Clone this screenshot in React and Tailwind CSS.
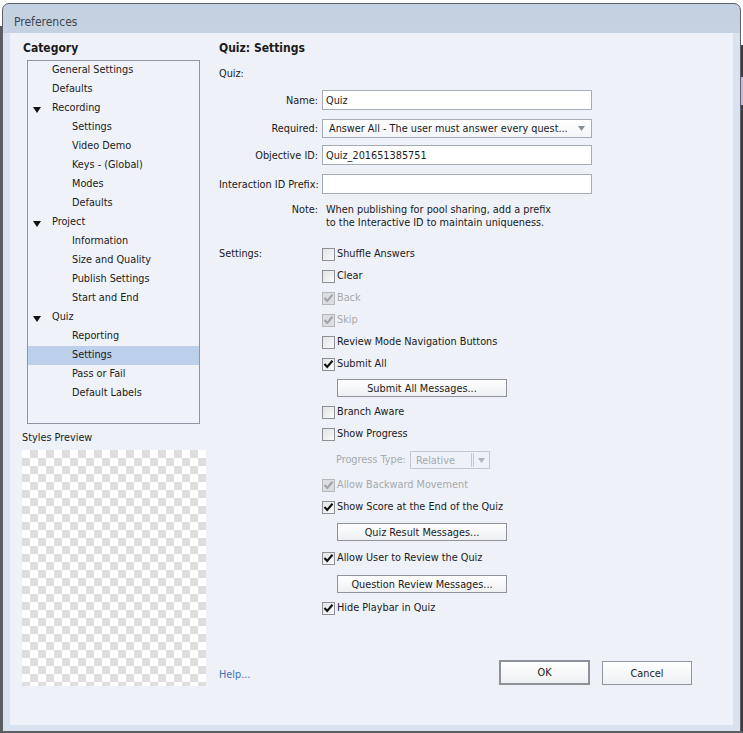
import React from "react";

const tree = [
  { t: "General Settings", l: 1 },
  { t: "Defaults", l: 1 },
  { t: "Recording", l: 1, open: true },
  { t: "Settings", l: 2 },
  { t: "Video Demo", l: 2 },
  { t: "Keys - (Global)", l: 2 },
  { t: "Modes", l: 2 },
  { t: "Defaults", l: 2 },
  { t: "Project", l: 1, open: true },
  { t: "Information", l: 2 },
  { t: "Size and Quality", l: 2 },
  { t: "Publish Settings", l: 2 },
  { t: "Start and End", l: 2 },
  { t: "Quiz", l: 1, open: true },
  { t: "Reporting", l: 2 },
  { t: "Settings", l: 2, sel: true },
  { t: "Pass or Fail", l: 2 },
  { t: "Default Labels", l: 2 },
];

function TreeRow({ item }) {
  return (
    <div
      className={`flex items-center h-[19px] ${item.sel ? "bg-[#bccfeb]" : ""} ${
        item.l === 2 ? "pl-[44px]" : "pl-[5px]"
      }`}
    >
      {item.l === 1 && (
        <div className="w-[19px] flex items-center">
          {item.open && (
            <svg width="8" height="6" viewBox="0 0 8 6" className="mt-[3px]">
              <polygon points="0,0 8,0 4,6" fill="#111" />
            </svg>
          )}
        </div>
      )}
      <span className="-mt-[2px]">{item.t}</span>
    </div>
  );
}

function Box({ checked, disabled }) {
  return (
    <div
      className={`w-[13px] h-[13px] border flex items-center justify-center shrink-0 ${
        disabled
          ? "border-[#b4b7bb] bg-[#dcdde0]"
          : "border-[#8d9196] bg-gradient-to-br from-[#e2e3e5] to-[#fbfbfb]"
      }`}
    >
      {checked && (
        <svg width="11" height="11" viewBox="0 0 11 11">
          <polyline
            points="1.5,5 4.2,8 9.5,1.8"
            fill="none"
            stroke={disabled ? "#a1a4a8" : "#101010"}
            strokeWidth="2.1"
          />
        </svg>
      )}
    </div>
  );
}

function Check({ label, checked, disabled }) {
  return (
    <div className="flex items-center h-[22px]">
      <Box checked={checked} disabled={disabled} />
      <span className={`ml-[2px] -mt-[1px] ${disabled ? "text-[#a7aaae]" : ""}`}>{label}</span>
    </div>
  );
}

function Btn({ children, h }) {
  return (
    <div className={`flex items-start ${h}`}>
      <div className="ml-[15px] w-[170px] h-[18px] border border-[#8f949a] bg-gradient-to-b from-white to-[#eef0f3] flex items-center justify-center">
        {children}
      </div>
    </div>
  );
}

function FormRow({ label, children, className = "" }) {
  return (
    <div className={`flex items-center ${className}`}>
      <div className="w-[99px] text-right whitespace-nowrap">{label}</div>
      <div className="ml-[4px]">{children}</div>
    </div>
  );
}

export default function App() {
  return (
    <div className="relative w-[743px] h-[733px] bg-white overflow-hidden font-['DejaVu_Sans_Condensed','DejaVu_Sans',sans-serif] text-[10.8px] leading-[15px] text-[#1b1b1b]">
      <div className="absolute left-0 top-[26px] w-[2px] h-[707px] bg-[#5a5c60]" />
      <div className="absolute right-0 top-[45px] w-[2px] h-[688px] bg-[#3c3d40]" />
      <div className="absolute right-0 top-[77px] w-[2px] h-[28px] bg-[#c7b5e8]" />
      <div className="absolute left-0 bottom-0 w-[743px] h-[2px] bg-[#5a5c60]" />

      <div className="absolute left-[2px] top-[3px] w-[739px] h-[729px] border border-[#5d6166] rounded-t-[7px] bg-gradient-to-b from-[#c3d1e0] to-[#d8e3ef] flex flex-col">
        <div className="h-[29px] pt-[11px] pl-[11px] text-[12px] leading-[15px] text-[#3d4651] shrink-0">
          Preferences
        </div>
        <div className="flex-1 px-[7px] pb-[6px] bg-[#d8e3ef] flex">
          <div className="flex-1 bg-[#eef1f7] flex">
            {/* left column */}
            <div className="w-[199px] shrink-0 flex flex-col">
              <div className="pt-[7px] pl-[13px] font-bold text-[12px] leading-[16px]">Category</div>
              <div className="mt-[4px] ml-[17px] w-[173px] h-[364px] border border-[#8e95a3] bg-[#eff2f8]">
                {tree.map((it, i) => (
                  <TreeRow key={i} item={it} />
                ))}
              </div>
              <div className="mt-[6px] ml-[12px]">Styles Preview</div>
              <div className="mt-[5px] ml-[12px] w-[184px] h-[236px] bg-[conic-gradient(#dedede_90deg,#fff_90deg_180deg,#dedede_180deg_270deg,#fff_270deg)] bg-[length:16px_16px]" />
            </div>

            {/* right column */}
            <div className="flex-1 flex flex-col pl-[10px]">
              <div className="pt-[7px] font-bold text-[12px] leading-[16px]">Quiz: Settings</div>
              <div className="mt-[10px] leading-[16px]">Quiz:</div>

              <FormRow label="Name:" className="mt-[8px]">
                <div className="w-[270px] h-[20px] border border-[#a4acb6] bg-white pl-[3px] flex items-center">Quiz</div>
              </FormRow>
              <FormRow label="Required:" className="mt-[9px]">
                <div className="w-[270px] h-[19px] border border-[#a4acb6] bg-gradient-to-b from-white to-[#f3f5f8] pl-[6px] pr-[6px] flex items-center">
                  <span className="flex-1 whitespace-nowrap overflow-hidden">
                    Answer All - The user must answer every quest...
                  </span>
                  <svg width="7" height="5" viewBox="0 0 7 5" className="ml-[4px]">
                    <polygon points="0,0 7,0 3.5,5" fill="#8a8f96" />
                  </svg>
                </div>
              </FormRow>
              <FormRow label="Objective ID:" className="mt-[7px]">
                <div className="w-[270px] h-[20px] border border-[#a4acb6] bg-white pl-[3px] flex items-center">
                  Quiz_201651385751
                </div>
              </FormRow>
              <FormRow label="Interaction ID Prefix:" className="mt-[9px]">
                <div className="w-[270px] h-[20px] border border-[#a4acb6] bg-white" />
              </FormRow>
              <div className="mt-[9px] flex leading-[13px]">
                <div className="w-[99px] text-right">Note:</div>
                <div className="ml-[8px]">
                  <div>When publishing for pool sharing, add a prefix</div>
                  <div>to the Interactive ID to maintain uniqueness.</div>
                </div>
              </div>

              <div className="mt-[14px] flex">
                <div className="w-[103px] h-[22px] flex items-center -mt-[1px]">Settings:</div>
                <div className="flex flex-col">
                  <Check label="Shuffle Answers" />
                  <Check label="Clear" />
                  <Check label="Back" checked disabled />
                  <Check label="Skip" checked disabled />
                  <Check label="Review Mode Navigation Buttons" />
                  <Check label="Submit All" checked />
                  <Btn h="h-[26px] pt-[4px]">Submit All Messages...</Btn>
                  <Check label="Branch Aware" />
                  <Check label="Show Progress" />
                  <div className="h-[29px] flex items-start pt-[6px] pl-[14px]">
                    <span className="text-[#a7aaae] mt-[1px]">Progress Type:</span>
                    <div className="ml-[4px] w-[80px] h-[18px] border border-[#c4c8ce] flex items-center pl-[5px] pr-[4px] text-[#a7aaae]">
                      <span className="flex-1">Relative</span>
                      <div className="w-[3px] h-[14px] border-x border-[#c4c8ce] mr-[4px]" />
                      <svg width="7" height="5" viewBox="0 0 7 5">
                        <polygon points="0,0 7,0 3.5,5" fill="#b0b4ba" />
                      </svg>
                    </div>
                  </div>
                  <Check label="Allow Backward Movement" checked disabled />
                  <Check label="Show Score at the End of the Quiz" checked />
                  <Btn h="h-[29px] pt-[5px]">Quiz Result Messages...</Btn>
                  <Check label="Allow User to Review the Quiz" checked />
                  <Btn h="h-[28px] pt-[6px]">Question Review Messages...</Btn>
                  <Check label="Hide Playbar in Quiz" checked />
                </div>
              </div>

              <div className="mt-auto pb-[40px] flex items-center pr-[41px]">
                <span className="text-[#4274b5] mt-[4px]">Help...</span>
                <div className="ml-auto w-[91px] h-[25px] border-2 border-[#8c919a] bg-gradient-to-b from-white to-[#eef0f3] flex items-center justify-center">
                  OK
                </div>
                <div className="ml-[12px] w-[90px] h-[24px] mt-[1px] border border-[#8f96a0] bg-gradient-to-b from-white to-[#eef0f3] flex items-center justify-center">
                  Cancel
                </div>
              </div>
            </div>
          </div>
        </div>
      </div>
    </div>
  );
}
